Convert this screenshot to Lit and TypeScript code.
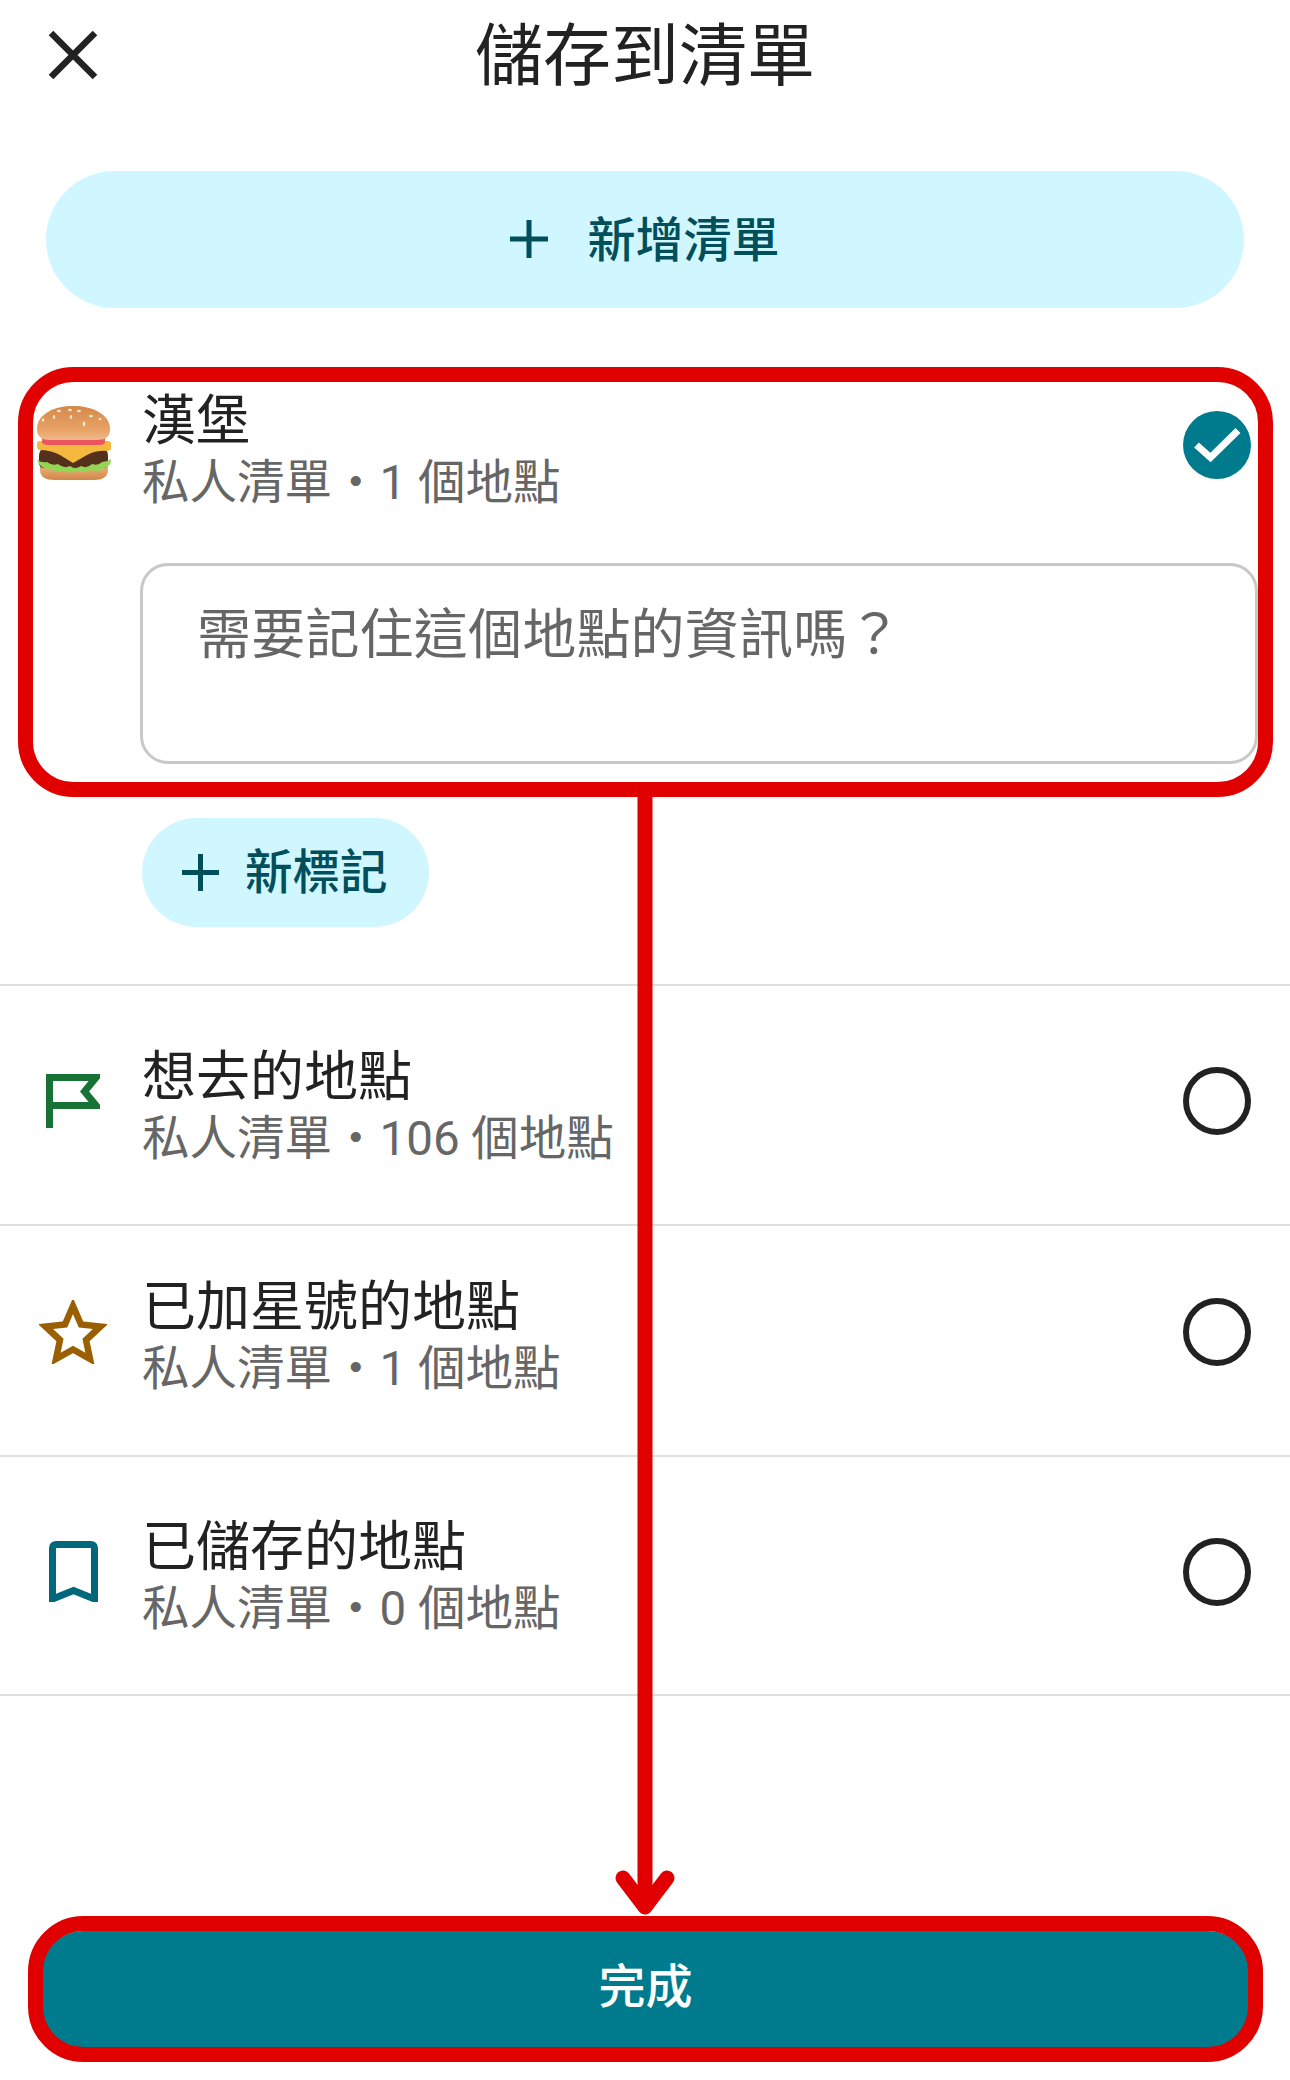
import { LitElement, css, html, svg } from "lit";
import { customElement } from "lit/decorators.js";

const flagIcon = svg`<path d="M3.5 54V3.5H50L38.5 17.5L50 31.5H3.5" fill="none" stroke="#177335" stroke-width="7"/>`;
const starIcon = svg`<path d="M34 6L42 24.5L61.5 26.5L47 40L51 59L34 49.5L17 59L21 40L6.500 26.500L26 24.500Z" fill="none" stroke="#9a5f00" stroke-width="6.500" stroke-linejoin="miter"/>`;
const bookmarkIcon = svg`<path d="M3.500 58V7.500Q3.500 3.500 7.500 3.500H41.500Q45.500 3.500 45.500 7.500V58L24.500 49.500Z" fill="none" stroke="#00687a" stroke-width="7"/>`;

const rows = [
  { name: "想去的地點", meta: "私人清單・106 個地點", size: "tall", w: 54, h: 55, box: "0 0 54 55", icon: flagIcon },
  { name: "已加星號的地點", meta: "私人清單・1 個地點", size: "short", w: 68, h: 64, box: "0 0 68 64", icon: starIcon },
  { name: "已儲存的地點", meta: "私人清單・0 個地點", size: "tall", w: 49, h: 61, box: "0 0 49 61", icon: bookmarkIcon },
];

const burger = html`<svg class="burger" width="74" height="74" viewBox="0 0 74 74">
  <defs>
    <linearGradient id="bun" x1="0" y1="0" x2="0" y2="1">
      <stop offset="0" stop-color="#d4894a" /><stop offset="0.7" stop-color="#e8a266" /><stop offset="1" stop-color="#f0b988" />
    </linearGradient>
    <linearGradient id="base" x1="0" y1="0" x2="0" y2="1">
      <stop offset="0" stop-color="#eeb07a" /><stop offset="1" stop-color="#cf8747" />
    </linearGradient>
  </defs>
  <path d="M3 60H71V64C71 71 65 74 57 74H17C9 74 3 71 3 64Z" fill="url(#base)" />
  <path d="M2 50C2 44 6 41 12 41H61C67 41 71 44 71 50V57C71 60 69 62 66 62H7C4 62 2 60 2 57Z" fill="#55301c" />
  <path d="M0 54Q5 57 10 56Q15 60 21 58Q27 63 33 60Q38 64 44 60Q50 63 55 58Q61 60 65 56Q70 56 74 53Q74 61 67 62Q61 67 54 64Q47 68 40 65Q33 68 26 65Q19 67 13 63Q3 63 0 54Z" fill="#93d554" />
  <path d="M0 38Q0 35 3 35H71Q74 35 74 38V42Q74 45 70 45Q60 44 50 49L36 57L23 49Q13 44 3 44Q0 44 0 41Z" fill="#f5b83f" />
  <path d="M5 31H68V36Q68 39 62 39H11Q5 39 5 36Z" fill="#ea5560" />
  <path d="M0 23C0 8 17 0 36 0S73 8 73 23C73 31 68 34 60 34H13C5 34 0 31 0 23Z" fill="url(#bun)" />
  <g fill="#f6e3c8">
    <ellipse cx="22" cy="5" rx="2" ry="1.200" /><ellipse cx="33" cy="4" rx="2" ry="1.200" />
    <ellipse cx="42" cy="5" rx="2" ry="1.300" /><ellipse cx="54" cy="10" rx="2" ry="1.200" />
    <ellipse cx="34" cy="11" rx="1.300" ry="2" /><ellipse cx="17" cy="11" rx="1.300" ry="2" />
    <ellipse cx="47" cy="18" rx="1.400" ry="2.400" /><ellipse cx="6" cy="14" rx="1.200" ry="1.800" />
    <ellipse cx="63" cy="13" rx="1.500" ry="1.200" />
  </g>
</svg>`;

@customElement("app-root")
export class AppRoot extends LitElement {
  static styles = css`
    :host {
      display: block;
      position: relative;
      width: 1290px;
      height: 2080px;
      overflow: hidden;
      background: #fff;
      color: #222;
      font-family: Roboto, "Noto Sans CJK TC", sans-serif;
    }

    .header {
      display: flex;
      align-items: center;
      justify-content: center;
      position: relative;
      height: 107px;
    }

    .close {
      position: absolute;
      left: 48px;
      top: 30px;
    }

    .title {
      margin-top: 8px;
      font-size: 68px;
      line-height: 107px;
    }

    .add-list {
      display: flex;
      align-items: center;
      justify-content: center;
      gap: 39px;
      height: 137px;
      margin: 64px 46px 0;
      border-radius: 69px;
      background: #d0f6ff;
      color: #004f5b;
      font-size: 48px;
      font-weight: 500;
    }

    .add-list svg {
      margin-bottom: 2px;
    }

    .label {
      margin-bottom: 8px;
    }

    .selected {
      margin-top: 78px;
    }

    .row {
      display: grid;
      grid-template-columns: 142px 1fr auto;
      align-items: center;
      padding-right: 39px;
    }

    .row.head {
      grid-template-rows: 124px;
    }

    .row.tall {
      height: 240px;
    }

    .row.short {
      height: 231px;
    }

    .row.list-item {
      border-top: 2px solid #e0e0e0;
      box-sizing: border-box;
    }

    .row.list-item:last-child {
      border-bottom: 2px solid #e0e0e0;
      height: 241px;
    }

    .row.list-item.tall .copy {
      margin-top: 6px;
    }

    .row.list-item.short .copy {
      margin-bottom: 4px;
    }

    .row.list-item.tall .lead,
    .row.list-item.tall .radio {
      margin-bottom: 8px;
    }

    .row.list-item.short .lead,
    .row.list-item.short .radio {
      margin-bottom: 18px;
    }

    .lead {
      display: flex;
      justify-content: center;
      width: 146px;
    }

    .burger {
      margin: 0 0 10px 2px;
    }

    .copy.first {
      margin-top: 8px;
    }

    .name {
      font-size: 54px;
      line-height: 62px;
      color: #222;
    }

    .meta {
      margin-top: -1px;
      font-size: 47.500px;
      line-height: 62px;
      color: #666;
    }

    .radio {
      box-sizing: border-box;
      width: 68px;
      height: 68px;
      border: 6px solid #222;
      border-radius: 50%;
    }

    .check {
      display: block;
      margin-bottom: 6px;
    }

    .note {
      box-sizing: border-box;
      height: 201px;
      margin: 53px 32px 0 140px;
      padding: 39px 54px 0;
      border: 3.500px solid #c8c8c8;
      border-radius: 28px;
      font-size: 54px;
      letter-spacing: 0.2px;
      line-height: 62px;
      color: #666;
    }

    .new-tag {
      display: flex;
      align-items: center;
      gap: 26px;
      box-sizing: border-box;
      width: 287px;
      height: 109px;
      margin: 54px 0 57px 142px;
      padding-left: 40px;
      border-radius: 55px;
      background: #d0f6ff;
      color: #004f5b;
      font-size: 47.500px;
      font-weight: 500;
    }

    .done {
      display: flex;
      align-items: center;
      justify-content: center;
      box-sizing: border-box;
      height: 118px;
      margin: 235px 41px 0 42px;
      padding-bottom: 16px;
      border-radius: 41px;
      background: #007b8d;
      color: #fff;
      font-size: 47px;
      font-weight: 500;
    }

    .marks {
      position: absolute;
      inset: 0;
      pointer-events: none;
    }
  `;

  render() {
    return html`
      <div class="header">
        <svg class="close" width="50" height="50" viewBox="0 0 50 50">
          <path d="M3 3L47 47M47 3L3 47" stroke="#222" stroke-width="6.500" fill="none" />
        </svg>
        <div class="title">儲存到清單</div>
      </div>

      <div class="add-list">
        <svg width="38" height="38" viewBox="0 0 38 38">
          <path d="M19 0V38M0 19H38" stroke="#004f5b" stroke-width="5" />
        </svg>
        <span class="label">新增清單</span>
      </div>

      <div class="selected">
        <div class="row head">
          <div class="lead">${burger}</div>
          <div class="copy first">
            <div class="name">漢堡</div>
            <div class="meta">私人清單・1 個地點</div>
          </div>
          <svg class="check" width="68" height="68" viewBox="0 0 68 68">
            <circle cx="34" cy="34" r="34" fill="#007b8d" />
            <path d="M13.500 34L27.500 46.500L55 19.500" fill="none" stroke="#fff" stroke-width="7" />
          </svg>
        </div>
        <div class="note">需要記住這個地點的資訊嗎？</div>
        <div class="new-tag">
          <svg width="37" height="37" viewBox="0 0 37 37">
            <path d="M18.500 0V37M0 18.500H37" stroke="#004f5b" stroke-width="5" />
          </svg>
          <span class="label">新標記</span>
        </div>
      </div>

      <div>
        ${rows.map(
          (row) => html`
            <div class="row list-item ${row.size}">
              <div class="lead">
                <svg width=${row.w} height=${row.h} viewBox=${row.box}>${row.icon}</svg>
              </div>
              <div class="copy">
                <div class="name">${row.name}</div>
                <div class="meta">${row.meta}</div>
              </div>
              <div class="radio"></div>
            </div>
          `,
        )}
      </div>

      <div class="done">完成</div>

      <svg class="marks" width="1290" height="2080" viewBox="0 0 1290 2080">
        <g fill="none" stroke="#e00000" stroke-width="15">
          <rect x="25.500" y="374.500" width="1240" height="415" rx="48" />
          <rect x="35.500" y="1923.500" width="1220" height="131" rx="48" />
          <path d="M645 797V1905" />
          <path d="M623 1878L645 1907L667 1878" stroke-linecap="round" stroke-linejoin="round" />
        </g>
      </svg>
    `;
  }
}
